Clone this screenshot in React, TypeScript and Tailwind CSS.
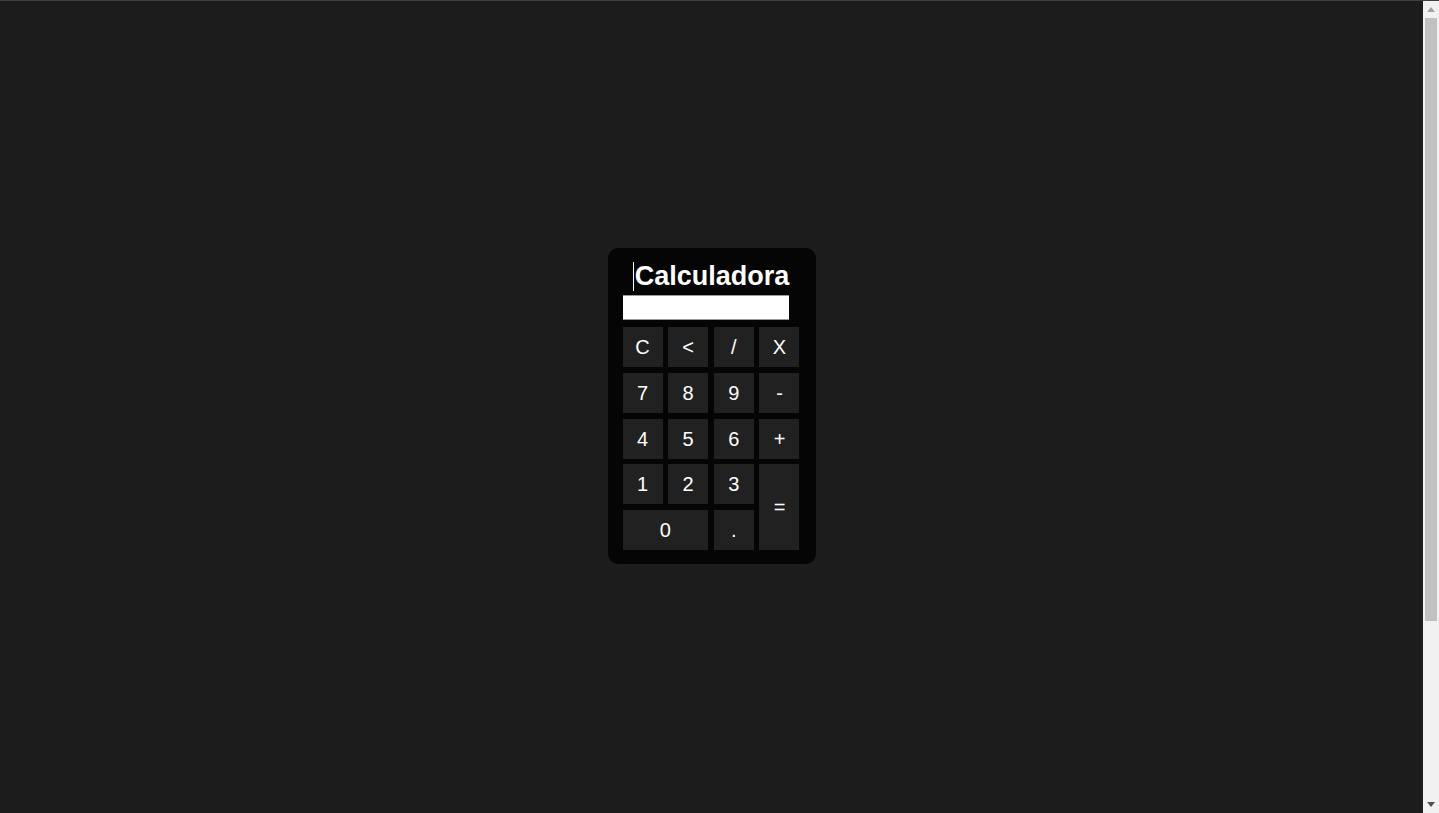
import React from "react";

const keys: { label: string; className?: string }[] = [
  { label: "C" },
  { label: "<" },
  { label: "/" },
  { label: "X" },
  { label: "7" },
  { label: "8" },
  { label: "9" },
  { label: "-" },
  { label: "4" },
  { label: "5" },
  { label: "6" },
  { label: "+" },
  { label: "1" },
  { label: "2" },
  { label: "3" },
  { label: "=", className: "row-span-2 col-start-4 row-start-4" },
  { label: "0", className: "col-span-2" },
  { label: "." },
];

const Scrollbar = () => (
  <div className="w-[16px] h-full bg-[#f1f1f1] flex flex-col items-center">
    <div className="h-[17px] flex items-center justify-center">
      <svg width="8" height="5" viewBox="0 0 8 5">
        <path d="M4 0 L8 5 L0 5 Z" fill="#a3a3a3" />
      </svg>
    </div>
    <div className="w-[12px] h-[603px] bg-[#c1c1c1]" />
    <div className="flex-1" />
    <div className="h-[17px] flex items-center justify-center">
      <svg width="8" height="5" viewBox="0 0 8 5">
        <path d="M0 0 L8 0 L4 5 Z" fill="#505050" />
      </svg>
    </div>
  </div>
);

const App = () => {
  return (
    <div
      className="h-[813px] overflow-hidden bg-[#1c1c1c] border-t border-[#3f3f3f] flex"
      style={{ fontFamily: '"Liberation Sans", Arial, sans-serif' }}
    >
      <main className="flex-1 flex items-center justify-center pb-[2px]">
        <div className="w-[208px] h-[316px] bg-[#050505] rounded-[10px] pl-[15px] pr-[16px] pt-[13px] pb-[14px] flex flex-col">
          <h1 className="h-[30px] flex items-center justify-center text-[27px] font-bold text-white leading-[30px]">
            <span className="w-px h-[29px] bg-white mr-[1px]" />
            Calculadora
          </h1>

          <input
            type="text"
            readOnly
            className="mt-[4px] w-[166px] h-[25px] bg-white border-y border-[#9a9a9a] outline-none"
          />

          <div className="mt-[7px] grid grid-cols-[40px_40px_40px_40px] grid-rows-[40px_40px_40px_40px_40px] gap-x-[5.67px] gap-y-[5.75px]">
            {keys.map((key) => (
              <button
                key={key.label}
                className={`bg-[#212121] text-white text-[20px] flex items-center justify-center ${key.className ?? ""}`}
              >
                {key.label}
              </button>
            ))}
          </div>
        </div>
      </main>

      <Scrollbar />
    </div>
  );
};

export default App;
